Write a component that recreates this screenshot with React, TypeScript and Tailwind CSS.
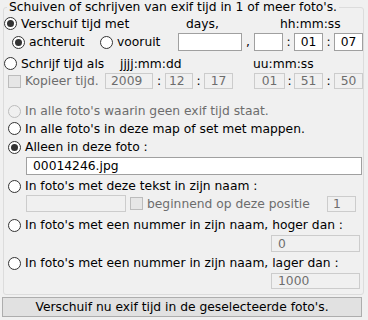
const Radio = ({ checked = false, disabled = false }: { checked?: boolean; disabled?: boolean }) => (
  <span
    className={`flex h-[13px] w-[13px] shrink-0 items-center justify-center rounded-full border ${
      disabled ? "border-[#bcbcbc] bg-[#f0f0f0]" : "border-[#333333] bg-white"
    }`}
  >
    {checked && <span className="h-[7px] w-[7px] rounded-full bg-[#333333]"></span>}
  </span>
);

const Check = () => (
  <span className="h-[13px] w-[13px] shrink-0 border border-[#bcbcbc] bg-[#e6e6e6]"></span>
);

const Box = ({
  value = "",
  disabled = false,
  className = "",
}: {
  value?: string;
  disabled?: boolean;
  className?: string;
}) => (
  <div
    className={`flex shrink-0 items-center border px-[6px] ${
      disabled ? "border-[#cccccc] bg-[#f0f0f0] text-[#6d6d6d]" : "border-[#a0a0a0] bg-white text-black"
    } ${className}`}
  >
    {value}
  </div>
);

const Sep = ({ ch, w }: { ch: string; w: string }) => (
  <span className={`flex shrink-0 justify-center ${w}`}>{ch}</span>
);

const App = () => {
  return (
    <div className="h-[320px] w-[368px] overflow-hidden bg-[#f0f0f0] font-['DejaVu_Sans',sans-serif] text-[12.3px] leading-[14px] text-black">
      <fieldset className="ml-[3px] h-[295px] w-[361px] rounded-[3px] border border-[#dcdcdc]">
        <legend className="ml-[3px] px-[2px] leading-[14px]">
          Schuiven of schrijven van exif tijd in 1 of meer foto's.
        </legend>

        <div className="flex flex-col">
          <div className="flex h-[19px] items-center">
            <span className="flex w-[182px] items-center gap-[4px]">
              <Radio checked />
              Verschuif tijd met
            </span>
            <span className="w-[94px]">days,</span>
            <span>hh:mm:ss</span>
          </div>

          <div className="flex h-[18px] items-center">
            <span className="ml-[8px] flex w-[88px] items-center gap-[4px]">
              <Radio checked />
              achteruit
            </span>
            <span className="flex w-[78px] items-center gap-[4px]">
              <Radio />
              vooruit
            </span>
            <Box className="h-[18px] w-[64px]" />
            <Sep ch="," w="w-[12px]" />
            <Box className="h-[18px] w-[29px]" />
            <Sep ch=":" w="w-[11px]" />
            <Box value="01" className="h-[18px] w-[29px] justify-center" />
            <Sep ch=":" w="w-[11px]" />
            <Box value="07" className="h-[18px] w-[29px] justify-center" />
          </div>

          <div className="mt-[3px] flex h-[19px] items-center">
            <span className="flex w-[116px] items-center gap-[4px]">
              <Radio />
              Schrijf tijd als
            </span>
            <span className="w-[133px]">jjjj:mm:dd</span>
            <span>uu:mm:ss</span>
          </div>

          <div className="flex h-[16px] items-center">
            <span className="ml-[4px] flex w-[97px] items-center gap-[4px] text-[#6d6d6d]">
              <Check />
              Kopieer tijd.
            </span>
            <Box disabled value="2009" className="h-[16px] w-[48px] pl-[5px]" />
            <Sep ch=":" w="w-[12px]" />
            <Box disabled value="12" className="h-[16px] w-[28px] pl-[3px]" />
            <Sep ch=":" w="w-[11px]" />
            <Box disabled value="17" className="h-[16px] w-[29px] justify-center" />
            <span className="w-[21px]"></span>
            <Box disabled value="01" className="h-[16px] w-[31px] justify-center" />
            <Sep ch=":" w="w-[9px]" />
            <Box disabled value="51" className="h-[16px] w-[29px] justify-center" />
            <Sep ch=":" w="w-[11px]" />
            <Box disabled value="50" className="h-[16px] w-[29px] justify-center" />
          </div>

          <div className="mt-[13px] flex h-[18px] items-center gap-[4px] pl-[4px] text-[#6d6d6d]">
            <Radio disabled />
            In alle foto's waarin geen exif tijd staat.
          </div>
          <div className="flex h-[17px] items-center gap-[4px] pl-[4px]">
            <Radio />
            In alle foto's in deze map of set met mappen.
          </div>
          <div className="mt-[1px] flex h-[18px] items-center gap-[4px] pl-[4px]">
            <Radio checked />
            Alleen in deze foto :
          </div>
          <div className="mt-[1px] pl-[22px]">
            <Box value="00014246.jpg" className="h-[18px] w-[336px]" />
          </div>

          <div className="mt-[2px] flex h-[18px] items-center gap-[4px] pl-[4px]">
            <Radio />
            In foto's met deze tekst in zijn naam :
          </div>
          <div className="flex h-[17px] items-center pl-[22px]">
            <Box disabled className="h-[17px] w-[100px]" />
            <span className="ml-[4px] flex w-[197px] items-center gap-[4px] text-[#6d6d6d]">
              <Check />
              beginnend op deze positie
            </span>
            <Box disabled value="1" className="h-[16px] w-[29px] pl-[5px]" />
          </div>

          <div className="mt-[4px] flex h-[18px] items-center gap-[4px] pl-[4px]">
            <Radio />
            In foto's met een nummer in zijn naam, hoger dan :
          </div>
          <div className="mt-[1px] flex justify-end pr-[3px]">
            <Box disabled value="0" className="h-[17px] w-[89px]" />
          </div>

          <div className="mt-[2px] flex h-[18px] items-center gap-[4px] pl-[4px]">
            <Radio />
            In foto's met een nummer in zijn naam, lager dan :
          </div>
          <div className="mt-[1px] flex justify-end pr-[3px]">
            <Box disabled value="1000" className="h-[16px] w-[89px]" />
          </div>
        </div>
      </fieldset>

      <button className="ml-[2px] mt-[2px] flex h-[20px] w-[360px] items-center justify-center border border-[#adadad] bg-[#e1e1e1] leading-[14px]">
        Verschuif nu exif tijd in de geselecteerde foto's.
      </button>
    </div>
  );
};

export default App;
